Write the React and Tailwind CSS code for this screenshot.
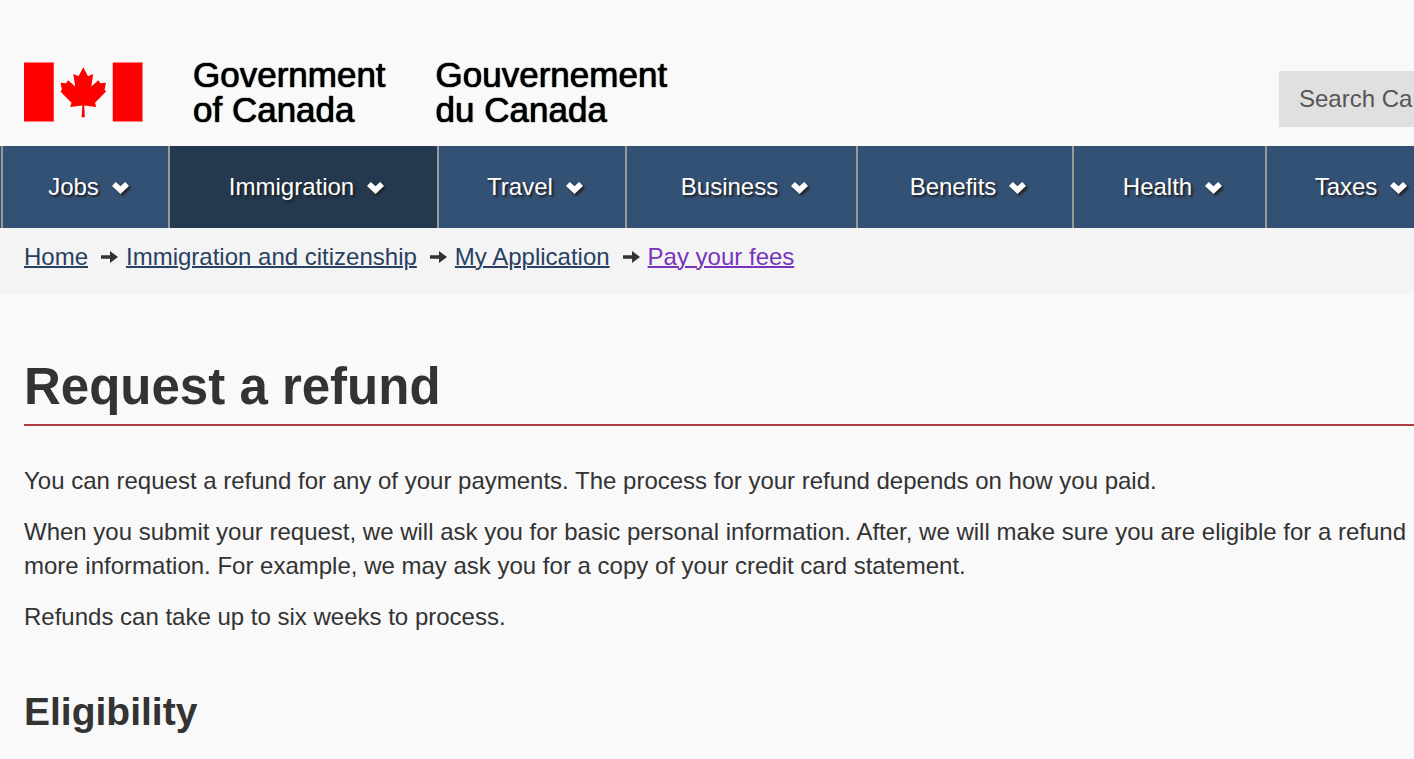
const menuItems = [
    { label: "Jobs", width: "w-[167px]" },
    { label: "Immigration", width: "w-[269px]", active: true },
    { label: "Travel", width: "w-[188px]" },
    { label: "Business", width: "w-[231px]" },
    { label: "Benefits", width: "w-[216px]" },
    { label: "Health", width: "w-[193px]" },
    { label: "Taxes", width: "w-[184px]" },
];

const breadcrumbs = [
    { label: "Home" },
    { label: "Immigration and citizenship" },
    { label: "My Application" },
    { label: "Pay your fees", visited: true },
];

function Flag() {
    return (
        <svg viewBox="0 0 9600 4800" className="mt-[5px] h-[60px] w-[119px]" preserveAspectRatio="none" aria-hidden="true">
            <path fill="#f00" d="M0 40h2400v4720H0zM7160 40h2400v4720H7160z" />
            <path
                fill="#f00"
                d="M4650 4420 4700 3480 3730 3590 3830 3250 2940 2350 3060 2220 2950 1660 3400 1700 3560 1450 4130 1960 3980 960 4400 1140 4780 420 5160 1140 5580 960 5430 1960 6000 1450 6160 1700 6610 1660 6500 2220 6620 2350 5730 3250 5830 3590 4860 3480 4910 4420z"
            />
        </svg>
    );
}

function Chevron() {
    return (
        <svg
            viewBox="0 0 17 12"
            className="mt-0.5 h-3 w-[17px] drop-shadow-[2px_2px_1px_#222]"
            aria-hidden="true"
        >
            <path fill="#fff" d="M0 4 3.8 0l4.7 4.2L13.2 0 17 4l-8.5 8z" />
        </svg>
    );
}

function Arrow() {
    return (
        <svg viewBox="0 0 17 12" className="h-3 w-[17px]" aria-hidden="true">
            <path fill="#333" d="M0 4.2h9V0l8 6-8 6V7.8H0z" />
        </svg>
    );
}

export default function App() {
    return (
        <div className="min-h-screen overflow-x-hidden bg-[#f9f9f9] font-['Liberation_Sans',Arial,sans-serif] text-2xl text-[#333]">
            <header>
                <div className="flex items-start pt-[57px] pb-[19px] pl-6">
                    <a
                        href="#"
                        className="flex gap-[50px] text-[35px] leading-[35px] text-black [text-shadow:0_0_1px_black,0_0_1px_black]"
                    >
                        <Flag />
                        <span>
                            Government
                            <br />
                            of Canada
                        </span>
                        <span>
                            Gouvernement
                            <br />
                            du Canada
                        </span>
                    </a>
                    <form className="mt-[14px] ml-auto">
                        <input
                            type="text"
                            aria-label="Search Canada.ca"
                            placeholder="Search Canada.ca"
                            className="block h-14 w-[135px] bg-[#e0e0e0] pl-5 placeholder:text-[#555]"
                        />
                    </form>
                </div>

                <nav className="overflow-hidden bg-[#335075]">
                    <ul className="flex pl-px">
                        {menuItems.map((item) => (
                            <li key={item.label} className={`shrink-0 border-l-2 border-[#999] ${item.width}`}>
                                <a
                                    href="#"
                                    className={`flex h-[82px] items-center justify-center gap-[13px] pl-1.5 text-white [text-shadow:2px_2px_2px_#222] ${
                                        item.active ? "bg-[#243850]" : ""
                                    }`}
                                >
                                    {item.label}
                                    <Chevron />
                                </a>
                            </li>
                        ))}
                    </ul>
                </nav>

                <nav aria-label="Breadcrumb" className="bg-[#f4f4f4] px-6 pt-3 pb-5">
                    <ol className="flex leading-[34px]">
                        {breadcrumbs.map((crumb, i) => (
                            <li key={crumb.label} className="flex items-center">
                                {i > 0 && (
                                    <span className="pr-2 pl-[13px]">
                                        <Arrow />
                                    </span>
                                )}
                                <a
                                    href="#"
                                    className={`underline decoration-2 ${
                                        crumb.visited ? "text-[#7834bc]" : "text-[#284162]"
                                    }`}
                                >
                                    {crumb.label}
                                </a>
                            </li>
                        ))}
                    </ol>
                </nav>
            </header>

            <main className="pl-6 leading-[34px]">
                <h1 className="mt-[63px] border-b-2 border-[#af3c43] pb-[7px] text-[51px] leading-[60px] font-bold">
                    Request a refund
                </h1>
                <p className="mt-[38px]">
                    You can request a refund for any of your payments. The process for your refund depends on how you
                    paid.
                </p>
                <p className="mt-[17px]">
                    When you submit your request, we will ask you for basic personal information. After, we will make
                    sure you are eligible for a refund more information. For example, we may ask you for a copy of your
                    credit card statement.
                </p>
                <p className="mt-[17px]">Refunds can take up to six weeks to process.</p>
                <h2 className="mt-14 text-[39px] leading-[43px] font-bold">Eligibility</h2>
            </main>
        </div>
    );
}
